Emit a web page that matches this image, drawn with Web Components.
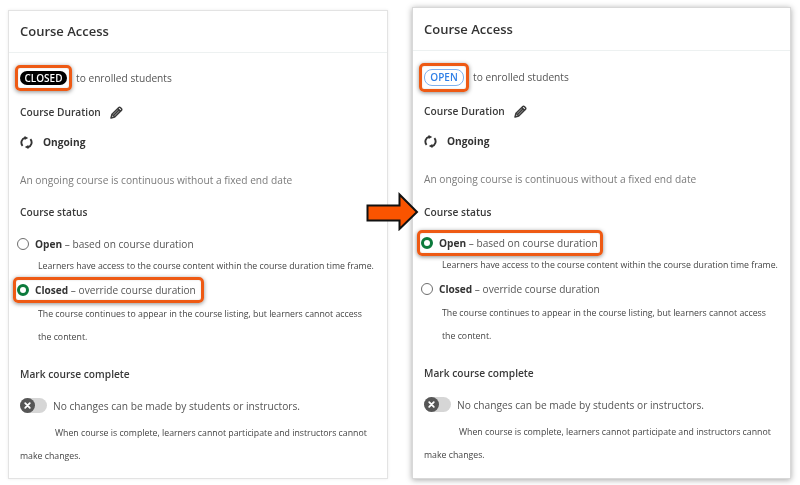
<!DOCTYPE html>
<html lang="en">
<head>
<meta charset="utf-8">
<title>Course Access</title>
<style>
  body { margin: 0; background: #fff; font-family: "Open Sans", sans-serif; }
</style>
</head>
<body>
<compare-page>
  <course-card state="closed"></course-card>
  <course-card state="open"></course-card>
</compare-page>

<script>
const pageTemplate = document.createElement("template");
pageTemplate.innerHTML = `
<style>
  :host { display: grid; grid-template-columns: 380px 379px; column-gap: 24px; padding-left: 8px; position: relative; width: 792px; height: 485px; box-sizing: border-box; filter: blur(.35px); }
  svg { position: absolute; left: 366px; top: 192px; }
</style>
<slot></slot>
<svg width="53" height="39" viewBox="0 0 53 39">
  <path d="M1.5 13.5H33.5V2.5L51 20L33.5 37V28.5H1.5Z" fill="#fa5400" stroke="#111" stroke-width="2" stroke-linejoin="miter"/>
</svg>
`;

class ComparePage extends HTMLElement {
  constructor() {
    super();
    this.attachShadow({ mode: "open" });
    this.shadowRoot.appendChild(pageTemplate.content.cloneNode(true));
  }
}

const markTemplate = document.createElement("template");
markTemplate.innerHTML = `
<style>
  :host { display: inline-flex; align-items: center; position: relative; }
  .ring {
    position: absolute;
    top: var(--mark-top, -6px); bottom: var(--mark-bottom, -6px);
    left: var(--mark-left, -5px); right: var(--mark-right, -5px);
    border: 3px solid #ee5a14; border-radius: 5px;
    box-shadow: 0 1px 4px rgba(0,0,0,.45), inset 0 0 2px rgba(0,0,0,.15);
    pointer-events: none;
  }
</style>
<slot></slot>
<span class="ring"></span>
`;

class MarkBox extends HTMLElement {
  constructor() {
    super();
    this.attachShadow({ mode: "open" });
    this.shadowRoot.appendChild(markTemplate.content.cloneNode(true));
  }
}

const pillTemplate = document.createElement("template");
pillTemplate.innerHTML = `
<style>
  :host { display: inline-block; font-size: 10px; font-weight: 600; line-height: 14px; border-radius: 8px; text-align: center; box-sizing: border-box; }
  :host([kind=closed]) { width: 47px; height: 14px; background: #000; color: #fff; }
  :host([kind=open]) { width: 40px; height: 17px; line-height: 15px; background: #fff; color: #2f7fe6; border: 1px solid #7fb2ee; }
</style>
<slot></slot>
`;

class StatusPill extends HTMLElement {
  constructor() {
    super();
    this.attachShadow({ mode: "open" });
    this.shadowRoot.appendChild(pillTemplate.content.cloneNode(true));
  }
}

const radioTemplate = document.createElement("template");
radioTemplate.innerHTML = `
<style>
  :host { display: inline-flex; align-items: center; gap: 6px; height: 20px; margin-left: -3px; font-size: 10.15px; color: #555; white-space: nowrap; }
  .dot { width: 12px; height: 12px; box-sizing: border-box; border-radius: 50%; border: 1.5px solid #6e6e6e; background: #fff; flex: none; }
  :host([checked]) .dot { border: 3.5px solid #0b7a3b; }
  b { font-weight: 700; color: #333; }
</style>
<span class="dot"></span>
<span><b><slot name="name"></slot></b> – <slot></slot></span>
`;

class RadioOption extends HTMLElement {
  constructor() {
    super();
    this.attachShadow({ mode: "open" });
    this.shadowRoot.appendChild(radioTemplate.content.cloneNode(true));
  }
}

const toggleTemplate = document.createElement("template");
toggleTemplate.innerHTML = `
<style>
  :host { display: block; width: 27px; height: 15px; border-radius: 8px; background: #d6d6d6; flex: none; }
  svg { display: block; }
</style>
<svg width="15" height="15" viewBox="0 0 15 15">
  <circle cx="7.5" cy="7.5" r="7.5" fill="#565656"/>
  <path d="M5.2 5.2L9.8 9.8M9.8 5.2L5.2 9.8" stroke="#fff" stroke-width="1.8" stroke-linecap="round"/>
</svg>
`;

class ToggleOff extends HTMLElement {
  constructor() {
    super();
    this.attachShadow({ mode: "open" });
    this.shadowRoot.appendChild(toggleTemplate.content.cloneNode(true));
  }
}

const cardTemplate = document.createElement("template");
cardTemplate.innerHTML = `
<style>
  :host { display: block; box-sizing: border-box; background: #fff; border: 1px solid #e3e3e3; color: #333; }
  :host([state=closed]) { margin-top: 10px; height: 469px; box-shadow: 0 0 3px rgba(0,0,0,.08); --first: 15px; --status: 12px; --radio: 12px; }
  :host([state=open]) { margin-top: 7px; height: 472px; border-color: #d8d8d8; box-shadow: 0 1px 6px rgba(0,0,0,.35); --first: 16px; --status: 13px; --radio: 11px; }
  header { height: 42px; display: flex; align-items: center; padding: 0 11px; font-size: 13px; font-weight: 600; border-bottom: 1px solid #edf1f1; box-sizing: content-box; }
  :host([state=closed]) header { height: 39px; padding-bottom: 2px; }
  .body { padding: 0 11px; display: flex; flex-direction: column; }
  .row { display: flex; align-items: center; height: 20px; font-size: 10.2px; white-space: nowrap; }
  .access { margin-top: var(--first); gap: 9px; color: #555; }
  .heading { font-weight: 600; color: #3a3a3a; }
  .duration { margin-top: 14px; gap: 9px; }
  .ongoing { margin-top: 10px; gap: 10px; font-weight: 700; }
  .note { margin-top: 18px; color: #7b7b7b; }
  .status { margin-top: var(--status); }
  .opt { display: flex; }
  .open { margin-top: var(--radio); }
  .closed { margin-top: 1.5px; }
  p { margin: 0; font-size: 8.75px; line-height: 23px; color: #444; white-space: nowrap; }
  p.desc { padding-left: 18px; margin-top: 1px; }
  p.second { margin-top: 3.5px; }
  .mark { margin-top: 14.5px; }
  .switch { margin-top: 12px; gap: 6px; color: #555; }
  .last { margin-top: 6px; text-indent: 35px; }
  svg { display: block; flex: none; }
</style>
<header>Course Access</header>
<div class="body">
  <div class="row access"><span id="pill"></span><span>to enrolled students</span></div>
  <div class="row heading duration">Course Duration
    <svg width="13" height="13" viewBox="0 0 13 13"><path d="M1 12L2 8.3L8.6 1.7C9.2 1.1 9.9 1.1 10.5 1.7L11.3 2.5C11.9 3.1 11.9 3.8 11.3 4.4L4.7 11ZM2.8 8.6L4.4 10.2M7.8 2.6L10.4 5.2" fill="none" stroke="#3a3a3a" stroke-width="1.5" stroke-linejoin="round"/><path d="M3.5 8.3L8.7 3.1L9.9 4.3L4.7 9.5Z" fill="#3a3a3a"/></svg>
  </div>
  <div class="row ongoing">
    <svg width="13" height="13" viewBox="0 0 13 13"><path d="M2.6 9.8A5 5 0 0 1 5.2 1.7M10.4 3.2A5 5 0 0 1 7.8 11.3" fill="none" stroke="#333" stroke-width="1.9"/><path d="M4.6 0L8.2 1.9L4.6 3.9ZM8.4 13L4.8 11.1L8.4 9.1Z" fill="#333"/></svg>
    <span>Ongoing</span>
  </div>
  <div class="row note">An ongoing course is continuous without a fixed end date</div>
  <div class="row heading status">Course status</div>
  <div class="opt open" id="openOpt"></div>
  <p class="desc">Learners have access to the course content within the course duration time frame.</p>
  <div class="opt closed" id="closedOpt"></div>
  <p class="desc second">The course continues to appear in the course listing, but learners cannot access<br>the content.</p>
  <div class="row heading mark">Mark course complete</div>
  <div class="row switch"><toggle-off></toggle-off><span>No changes can be made by students or instructors.</span></div>
  <p class="last">When course is complete, learners cannot participate and instructors cannot<br>make changes.</p>
</div>
`;

class CourseCard extends HTMLElement {
  constructor() {
    super();
    this.attachShadow({ mode: "open" });
  }

  connectedCallback() {
    const root = this.shadowRoot;
    root.appendChild(cardTemplate.content.cloneNode(true));
    const state = this.getAttribute("state");

    const pillLabel = state === "open" ? "OPEN" : "CLOSED";
    root.querySelector("#pill").style.display = "flex";
    root.querySelector("#pill").innerHTML =
      `<mark-box><status-pill kind="${state}">${pillLabel}</status-pill></mark-box>`;

    const openOpt = `<radio-option ${state === "open" ? "checked" : ""}><span slot="name">Open</span>based on course duration</radio-option>`;
    const closedOpt = `<radio-option ${state === "closed" ? "checked" : ""}><span slot="name">Closed</span>override course duration</radio-option>`;
    const marked = (html, right) => `<mark-box style="--mark-top:-3px;--mark-bottom:-3px;--mark-left:-7px;--mark-right:${right}px">${html}</mark-box>`;

    root.querySelector("#openOpt").innerHTML = state === "open" ? marked(openOpt, -5) : openOpt;
    root.querySelector("#closedOpt").innerHTML = state === "closed" ? marked(closedOpt, -8) : closedOpt;
  }
}

customElements.define("mark-box", MarkBox);
customElements.define("status-pill", StatusPill);
customElements.define("radio-option", RadioOption);
customElements.define("toggle-off", ToggleOff);
customElements.define("course-card", CourseCard);
customElements.define("compare-page", ComparePage);
</script>
</body>
</html>
